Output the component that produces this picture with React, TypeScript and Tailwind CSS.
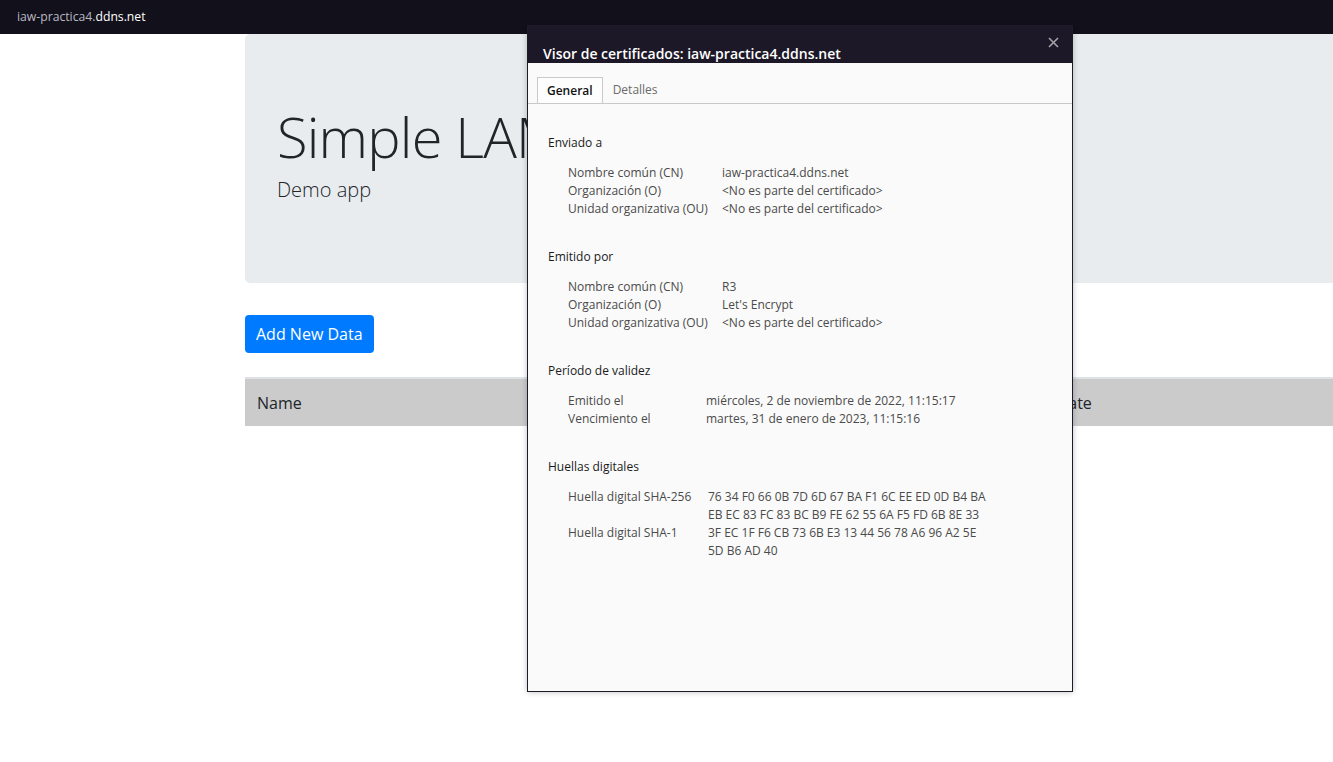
import React from "react";

const ui = { fontFamily: '"Open Sans", "Noto Sans", sans-serif' };

const issuedTo = [
  ["Nombre común (CN)", "iaw-practica4.ddns.net"],
  ["Organización (O)", "<No es parte del certificado>"],
  ["Unidad organizativa (OU)", "<No es parte del certificado>"],
];

const issuedBy = [
  ["Nombre común (CN)", "R3"],
  ["Organización (O)", "Let's Encrypt"],
  ["Unidad organizativa (OU)", "<No es parte del certificado>"],
];

const validity = [
  ["Emitido el", "miércoles, 2 de noviembre de 2022, 11:15:17"],
  ["Vencimiento el", "martes, 31 de enero de 2023, 11:15:16"],
];

const prints = [
  ["Huella digital SHA-256", ["76 34 F0 66 0B 7D 6D 67 BA F1 6C EE ED 0D B4 BA", "EB EC 83 FC 83 BC B9 FE 62 55 6A F5 FD 6B 8E 33"]],
  ["Huella digital SHA-1", ["3F EC 1F F6 CB 73 6B E3 13 44 56 78 A6 96 A2 5E", "5D B6 AD 40"]],
] as const;

function Section({ title, children }: { title: string; children: React.ReactNode }) {
  return (
    <div className="mb-[30px]">
      <div className="text-[#1a1a1a] leading-[18px]">{title}</div>
      <div className="mt-[12px] pl-[20px]">{children}</div>
    </div>
  );
}

function Rows({ rows, col }: { rows: string[][]; col: string }) {
  return (
    <>
      {rows.map(([k, v]) => (
        <div key={k} className="flex leading-[18px] text-[#4a4a4a]">
          <div className={col}>{k}</div>
          <div>{v}</div>
        </div>
      ))}
    </>
  );
}

function CertDialog() {
  return (
    <div
      className="absolute left-[527px] top-[25px] w-[546px] h-[667px] flex flex-col border border-[#1e1b29] bg-[#fafafa] shadow-[0_0_6px_rgba(0,0,0,0.25)] text-[12px]"
      style={ui}
    >
      <div className="relative h-[37px] shrink-0 bg-[#1c1827] pl-[15px] pt-[19px]">
        <div className="text-white font-semibold text-[14px] leading-[18px]">
          Visor de certificados: iaw-practica4.ddns.net
        </div>
        <svg className="absolute right-[13px] top-[11px]" width="11" height="11" viewBox="0 0 11 11">
          <path d="M1 1 L10 10 M10 1 L1 10" stroke="#a3a3a8" strokeWidth="1.6" />
        </svg>
      </div>
      <div className="pt-[14px]">
        <div className="flex border-b border-[#c9c9c9] pl-[9px]">
          <div className="-mb-px h-[26px] flex items-center px-[9px] border border-b-0 border-[#c9c9c9] bg-[#fdfdfd] text-[#111] font-semibold">
            General
          </div>
          <div className="h-[26px] flex items-center px-[10px] text-[#6b6b6b]">Detalles</div>
        </div>
      </div>
      <div className="pt-[30px] pl-[20px]">
        <Section title="Enviado a">
          <Rows rows={issuedTo} col="w-[154px]" />
        </Section>
        <Section title="Emitido por">
          <Rows rows={issuedBy} col="w-[154px]" />
        </Section>
        <Section title="Período de validez">
          <Rows rows={validity} col="w-[138px]" />
        </Section>
        <Section title="Huellas digitales">
          {prints.map(([k, lines]) => (
            <div key={k} className="flex leading-[18px] text-[#4a4a4a]">
              <div className="w-[140px]">{k}</div>
              <div>
                {lines.map((l) => (
                  <div key={l}>{l}</div>
                ))}
              </div>
            </div>
          ))}
        </Section>
      </div>
    </div>
  );
}

export default function App() {
  return (
    <div className="relative w-[1333px] h-[762px] overflow-hidden bg-white text-[#212529]" style={ui}>
      <div className="h-[34px] bg-[#12101b] flex items-center pl-[17px] text-[12.2px]">
        <span className="text-[#b9b7c2]">iaw-practica4.</span>
        <span className="text-white">ddns.net</span>
      </div>
      <div className="ml-[245px] w-[1110px]">
        <div className="bg-[#e9ecef] rounded-[5px] px-[32px] pt-[69px] h-[249px]">
          <h1 className="text-[56px] font-light leading-[67px] tracking-[-0.8px] m-0 whitespace-nowrap">
            Simple LAMP
          </h1>
          <p className="text-[20px] font-light leading-[30px] mt-[5px]">Demo app</p>
        </div>
        <button className="mt-[32px] h-[38px] px-[11px] rounded-[4px] bg-[#007bff] text-white text-[16px] leading-[24px]">
          Add New Data
        </button>
        <div className="mt-[24px] h-[49px] bg-[#cbcbcb] border-t-2 border-[#dee2e6] flex items-center px-[12px] text-[16px]">
          <div className="w-[780px]">Name</div>
          <div>Update</div>
        </div>
      </div>
      <CertDialog />
    </div>
  );
}
